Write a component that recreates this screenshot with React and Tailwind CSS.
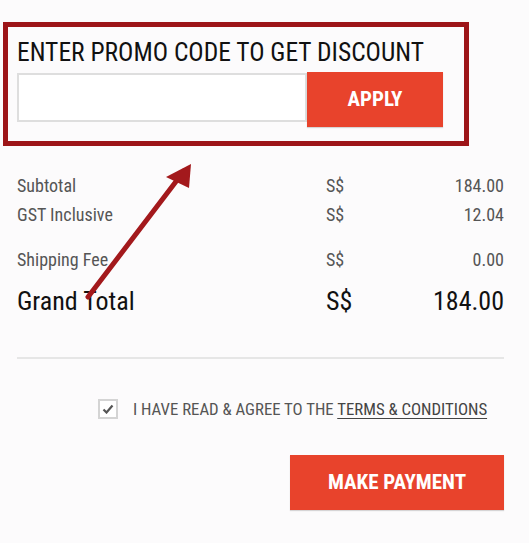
const font = { fontFamily: '"Liberation Sans Narrow", "Roboto Condensed", Roboto, sans-serif' }

function Row({ label, value, big }) {
  return (
    <div className={`flex items-center ${big ? 'h-[30px] text-[26px] text-[#111]' : 'h-[29px] text-[18px] text-[#555]'}`}>
      <span className="w-[309px]">{label}</span>
      <span className="flex-1">S$</span>
      <span>{value}</span>
    </div>
  )
}

export default function App() {
  return (
    <div className="relative w-[529px] h-[543px] overflow-hidden bg-[#fcfbfc]" style={font}>
      <div className="ml-[3px] mt-[22px] w-[466px] h-[124px] border-[5px] border-[#9d1518] pl-[9px] pt-[10px]">
        <div className="text-[25.5px] leading-[30px] text-[#111]">ENTER PROMO CODE TO GET DISCOUNT</div>
        <div className="mt-[5px] flex items-start">
          <div className="mt-[1px] w-[290px] h-[49px] border-2 border-[#dedede] bg-white" />
          <button className="w-[136px] h-[55px] bg-[#e8432c] text-white text-[21px] font-bold shadow-[0_1px_1px_rgba(0,0,0,0.15)]">APPLY</button>
        </div>
      </div>

      <div className="mx-[17px] mt-[25px] w-[487px]">
        <Row label="Subtotal" value="184.00" />
        <Row label="GST Inclusive" value="12.04" />
        <div className="h-[16px]" />
        <Row label="Shipping Fee" value="0.00" />
        <div className="h-[12px]" />
        <Row label="Grand Total" value="184.00" big />
        <div className="mt-[41px] h-[2px] bg-[#e6e6e6]" />
      </div>

      <div className="mt-[39px] ml-[98px] flex items-center gap-[15px]">
        <div className="w-[20px] h-[20px] border-2 border-[#d4d4d4] bg-white flex items-center justify-center">
          <svg width="12" height="10" viewBox="0 0 12 10">
            <path d="M1.5 5.5 L4.5 8.5 L10.5 1.5" fill="none" stroke="#555" strokeWidth="2.2" />
          </svg>
        </div>
        <div className="text-[16.8px] text-[#555] leading-[22px]">
          I HAVE READ &amp; AGREE TO THE <span className="underline underline-offset-[3px] text-[#444]">TERMS &amp; CONDITIONS</span>
        </div>
      </div>

      <div className="mt-[35px] mr-[25px] flex justify-end">
        <button className="w-[214px] h-[55px] bg-[#e8432c] text-white text-[21px] font-bold shadow-[0_1px_1px_rgba(0,0,0,0.15)]">MAKE PAYMENT</button>
      </div>

      <svg className="absolute left-0 top-0 pointer-events-none" width="529" height="543">
        <line x1="88" y1="297" x2="184" y2="171" stroke="#a3191c" strokeWidth="5" strokeLinecap="round" />
        <polygon points="191,164 166,177 189,188" fill="#a3191c" />
      </svg>
    </div>
  )
}
